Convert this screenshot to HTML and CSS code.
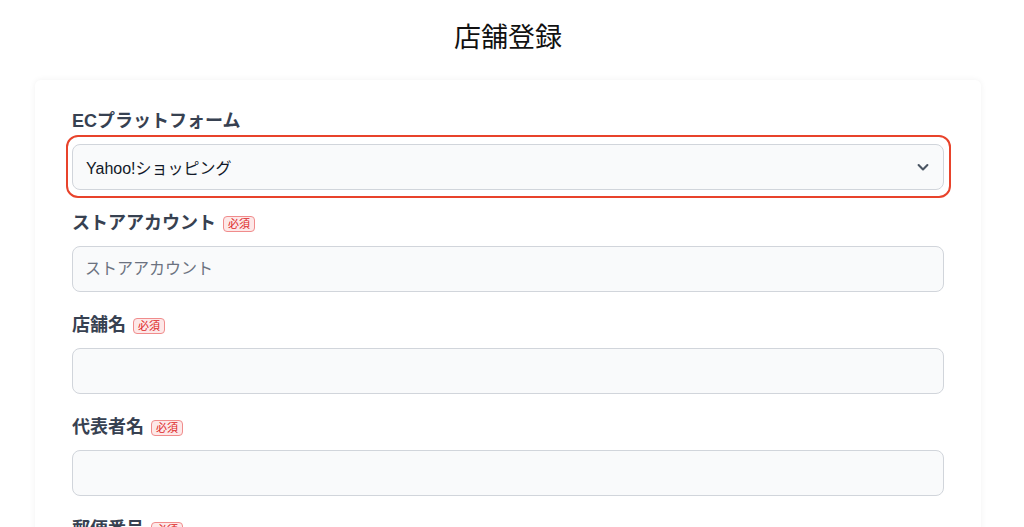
FILE: index.html
```html
<!DOCTYPE html>
<html lang="ja">
<head>
<meta charset="utf-8">
<title>店舗登録</title>
<link rel="stylesheet" href="styles.css">
</head>
<body>
<h1 class="title">店舗登録</h1>
<main class="card">
  <div class="field">
    <label class="label">ECプラットフォーム</label>
    <div class="highlight">
      <div class="select">
        <span class="select-value">Yahoo!ショッピング</span>
        <svg class="chev" width="16" height="16" viewBox="0 0 20 20" fill="none"><path d="M4.5 7.5l5.5 5.5 5.5-5.5" stroke="#4b5563" stroke-width="2.6" stroke-linecap="round" stroke-linejoin="round"/></svg>
      </div>
    </div>
  </div>
  <div class="field">
    <label class="label">ストアアカウント<span class="req">必須</span></label>
    <input class="input" placeholder="ストアアカウント">
  </div>
  <div class="field">
    <label class="label">店舗名<span class="req">必須</span></label>
    <input class="input">
  </div>
  <div class="field">
    <label class="label">代表者名<span class="req">必須</span></label>
    <input class="input">
  </div>
  <div class="field">
    <label class="label">郵便番号<span class="req">必須</span></label>
    <input class="input">
  </div>
</main>
</body>
</html>
```
FILE: styles.css
```css
* { box-sizing: border-box; }
html, body { margin: 0; padding: 0; background: #fff; }
body {
  font-family: "Liberation Sans", "Noto Sans CJK JP", sans-serif;
  color: #111827;
}
.title {
  margin: 0;
  padding: 18px 8px 0 0;
  height: 80px;
  text-align: center;
  font-size: 27px;
  font-weight: 400;
  line-height: 40px;
  color: #111;
}
.card {
  margin: 0 43px 0 35px;
  background: #fff;
  border-radius: 6px;
  box-shadow: 0 0 6px rgba(0,0,0,0.06);
  padding: 28px 37px 40px;
  display: flex;
  flex-direction: column;
  gap: 20px;
}
.field { display: flex; flex-direction: column; gap: 9px; }
.label {
  display: flex;
  align-items: center;
  font-size: 18px;
  font-weight: 700;
  line-height: 27px;
  color: #374151;
}
.req {
  margin-left: 7px;
  font-size: 11px;
  font-weight: 400;
  line-height: 14px;
  color: #dc2626;
  background: #fde8e8;
  border: 1px solid #f08c8c;
  border-radius: 4px;
  padding: 0 4px;
}
.highlight {
  margin: -9px -7px -8px -6px;
  padding: 7px 5px 6px 4px;
  border: 2px solid #e8432b;
  border-radius: 12px;
}
.select, .input {
  width: 100%;
  height: 46px;
  background: #f9fafb;
  border: 1px solid #d1d5db;
  border-radius: 8px;
  font-family: inherit;
  font-size: 16px;
}
.select {
  display: flex;
  align-items: center;
  justify-content: space-between;
  padding: 0 12px 0 13px;
}
.select-value { color: #111827; }
.input { padding: 0 12px; color: #111827; }
.input::placeholder { color: #6b7280; }
```
